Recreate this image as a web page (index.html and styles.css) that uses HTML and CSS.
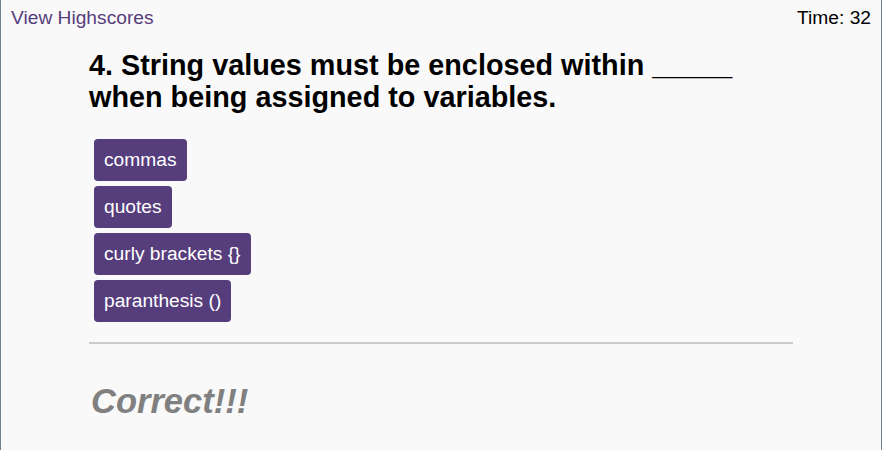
FILE: index.html
```html
<!DOCTYPE html>
<html>
<head>
<meta charset="utf-8">
<link rel="stylesheet" href="styles.css">
</head>
<body>
<div class="page">
  <header class="topbar">
    <a class="highscores" href="#">View Highscores</a>
    <span class="timer">Time: 32</span>
  </header>
  <main class="quiz">
    <h2 class="question">4. String values must be enclosed within _____ when being assigned to variables.</h2>
    <div class="choices">
      <button class="choice">commas</button>
      <button class="choice">quotes</button>
      <button class="choice">curly brackets {}</button>
      <button class="choice">paranthesis ()</button>
    </div>
    <hr class="divider">
    <p class="feedback">Correct!!!</p>
  </main>
</div>
</body>
</html>
```
FILE: styles.css
```css
html, body {
  margin: 0;
  padding: 0;
}
body {
  font-family: "Liberation Sans", Arial, sans-serif;
  background: #f9f9f9;
}
.page {
  min-height: 450px;
  box-sizing: border-box;
  border-left: 1px solid #6e7f8f;
  border-right: 1px solid #6e7f8f;
  background: #f9f9f9;
}
.topbar {
  display: flex;
  justify-content: space-between;
  align-items: baseline;
  padding: 7px 10px 0 10px;
  font-size: 19.2px;
  line-height: 22px;
}
.highscores {
  color: #563d7c;
  text-decoration: none;
}
.timer {
  color: #000;
}
.quiz {
  width: 80%;
  margin: 0 auto;
}
.question {
  font-size: 28.8px;
  font-weight: bold;
  color: #000;
  margin: 20px 0 26px 0;
  line-height: 32px;
}
.choices {
  display: flex;
  flex-direction: column;
  align-items: flex-start;
  gap: 5px;
  padding-left: 5px;
}
.choice {
  background: #563d7c;
  color: #fff;
  border: none;
  border-radius: 4px;
  font-family: "Liberation Sans", Arial, sans-serif;
  font-size: 19.2px;
  line-height: 22px;
  padding: 10px;
}
.divider {
  border: none;
  border-top: 2px solid #ccc;
  margin: 20px 0 0 0;
}
.feedback {
  font-size: 34.5px;
  font-weight: bold;
  font-style: italic;
  color: #808080;
  margin: 38px 0 0 2px;
}
```
